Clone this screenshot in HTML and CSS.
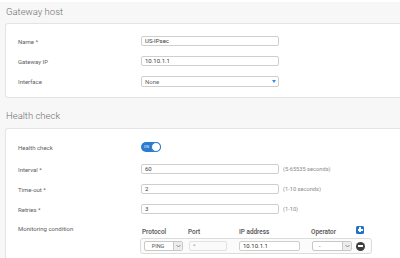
FILE: index.html
```html
<!DOCTYPE html>
<html>
<head>
<meta charset="utf-8">
<link rel="stylesheet" href="styles.css">
</head>
<body>
<div class="section first">
  <h2 class="title">Gateway host</h2>
  <div class="card card1">
    <div class="row"><div class="label">Name *</div><div class="input">US-IPsec</div></div>
    <div class="row"><div class="label">Gateway IP</div><div class="input">10.10.1.1</div></div>
    <div class="row"><div class="label">Interface</div><div class="input select">None<span class="tri"></span></div></div>
  </div>
</div>
<div class="section second">
  <h2 class="title">Health check</h2>
  <div class="card card2">
    <div class="row toggle-row"><div class="label">Health check</div><div class="toggle"><span class="on">ON</span><span class="knob"></span></div></div>
    <div class="row"><div class="label">Interval *</div><div class="input">60</div><div class="hint">(5-65535 seconds)</div></div>
    <div class="row"><div class="label">Time-out *</div><div class="input">2</div><div class="hint">(1-10 seconds)</div></div>
    <div class="row"><div class="label">Retries *</div><div class="input">3</div><div class="hint">(1-10)</div></div>
    <div class="row mon-row">
      <div class="label">Monitoring condition</div>
      <div class="mtable">
        <div class="mhead">
          <div class="c-proto">Protocol</div>
          <div class="c-port">Port</div>
          <div class="c-ip">IP address</div>
          <div class="c-op">Operator</div>
          <div class="c-act"><span class="plus"></span></div>
        </div>
        <div class="mrow">
          <div class="c-proto sel"><span class="sel-text">PING</span><span class="sel-arrow"><svg width="5" height="4" viewBox="0 0 5 4"><path d="M0.5 1 L2.5 3 L4.5 1" fill="none" stroke="#777" stroke-width="0.8"/></svg></span></div>
          <div class="c-port field dis">*</div>
          <div class="c-ip field">10.10.1.1</div>
          <div class="c-op sel"><span class="sel-text op">-</span><span class="sel-arrow"><svg width="5" height="4" viewBox="0 0 5 4"><path d="M0.5 1 L2.5 3 L4.5 1" fill="none" stroke="#777" stroke-width="0.8"/></svg></span></div>
          <div class="c-act"><span class="minus"></span></div>
        </div>
      </div>
    </div>
  </div>
</div>
</body>
</html>
```
FILE: styles.css
```css
html, body {
  margin: 0;
  padding: 0;
}
body {
  background: #f7f7f7;
  font-family: Roboto, "Liberation Sans", sans-serif;
  color: #555;
  width: 400px;
  height: 258px;
  overflow: hidden;
  border-top: 2px solid #ffffff;
  box-sizing: border-box;
}
.title {
  margin: 0;
  padding-left: 6px;
  height: 21px;
  line-height: 19px;
  font-size: 9.5px;
  font-weight: 300;
  color: #707070;
}
.second {
  margin-top: 7px;
}
.second .title {
  height: 23px;
  line-height: 22px;
}
.card {
  margin-left: 5px;
  background: #fff;
  border: 1px solid #e4e4e4;
  border-right: none;
  border-radius: 3px 0 0 3px;
  box-sizing: border-box;
}
.card1 {
  padding: 7px 0 6px 12px;
}
.card2 {
  padding: 8px 0 10px 12px;
}
.row {
  display: flex;
  align-items: center;
  height: 20px;
}
.toggle-row {
  margin-bottom: 2px;
}
.label {
  width: 123px;
  flex: none;
  font-size: 6px;
  color: #606060;
}
.input {
  position: relative;
  width: 138px;
  height: 10px;
  box-sizing: border-box;
  border: 1px solid #cfcfcf;
  border-radius: 2px;
  padding-left: 3px;
  font-size: 6px;
  line-height: 8px;
  color: #3a3a3a;
  background: #fff;
}
.select {
  height: 11px;
  line-height: 9px;
  color: #666;
}
.tri {
  position: absolute;
  right: 2px;
  top: 3px;
  width: 0;
  height: 0;
  border-left: 2px solid transparent;
  border-right: 2px solid transparent;
  border-top: 3px solid #3a8de0;
}
.hint {
  margin-left: 4px;
  font-size: 5.7px;
  color: #8a8a8a;
}
.toggle {
  position: relative;
  width: 20px;
  height: 10px;
  border-radius: 5px;
  background: #2b7cd0;
  box-sizing: border-box;
}
.on {
  position: absolute;
  left: 3px;
  top: 0;
  font-size: 3.5px;
  line-height: 10px;
  color: #e8f1fb;
}
.knob {
  position: absolute;
  right: 0;
  top: 0;
  width: 10px;
  height: 10px;
  border-radius: 50%;
  background: #fff;
  border: 1px solid #2b7cd0;
  box-sizing: border-box;
}
.mon-row {
  height: auto;
  align-items: flex-start;
}
.mon-row .label {
  line-height: 20px;
}
.mtable {
  margin-top: 7px;
  margin-left: -1px;
}
.mhead {
  display: flex;
  align-items: center;
  height: 12px;
  padding-left: 3px;
  font-size: 6.4px;
  font-weight: 500;
  color: #505050;
}
.mrow {
  display: flex;
  align-items: center;
  width: 232px;
  height: 16px;
  box-sizing: border-box;
  border: 1px solid #dcdcdc;
  border-radius: 3px;
  background: #fbfbfb;
  padding-left: 3px;
}
.c-proto { width: 39px; margin-right: 6px; flex: none; }
.c-port { width: 38px; margin-right: 12px; flex: none; }
.c-ip { width: 61px; margin-right: 12px; flex: none; }
.c-op { width: 40px; margin-right: 4px; flex: none; }
.c-act { width: 10px; flex: none; display: flex; align-items: center; }
.mhead .c-proto { margin-left: -1px; margin-right: 7px; }
.mhead .c-ip { margin-left: 1px; margin-right: 11px; }
.sel {
  display: flex;
  height: 10px;
  box-sizing: border-box;
  border: 1px solid #c8c8c8;
  border-radius: 2px;
  background: #fff;
  font-size: 5.5px;
  line-height: 8px;
  color: #555;
}
.sel-text {
  flex: 1;
  text-align: center;
  padding-right: 2px;
}
.sel-text.op {
  text-align: left;
  padding-left: 6px;
}
.sel-arrow {
  width: 8px;
  border-left: 1px solid #c8c8c8;
  background: #ececec;
  display: flex;
  align-items: center;
  justify-content: center;
}
.field {
  height: 10px;
  box-sizing: border-box;
  border: 1px solid #cfcfcf;
  border-radius: 2px;
  background: #fff;
  padding-left: 3px;
  font-size: 6px;
  line-height: 8px;
  color: #333;
}
.field.dis {
  border-color: #e2e2e2;
  background: #fafafa;
  color: #999;
}
.plus {
  position: relative;
  display: block;
  width: 8px;
  height: 8px;
  border-radius: 1.5px;
  background: #1f72c8;
  margin-top: -5px;
  margin-left: 1px;
}
.plus::before, .plus::after {
  content: "";
  position: absolute;
  background: #fff;
}
.plus::before {
  left: 1.5px;
  top: 3px;
  width: 5px;
  height: 2px;
}
.plus::after {
  left: 3px;
  top: 1.5px;
  width: 2px;
  height: 5px;
}
.minus {
  position: relative;
  display: block;
  width: 9px;
  height: 9px;
  border-radius: 50%;
  background: #3d3d3d;
}
.minus::before {
  content: "";
  position: absolute;
  left: 2px;
  top: 3.5px;
  width: 5px;
  height: 2px;
  background: #fff;
}
```
